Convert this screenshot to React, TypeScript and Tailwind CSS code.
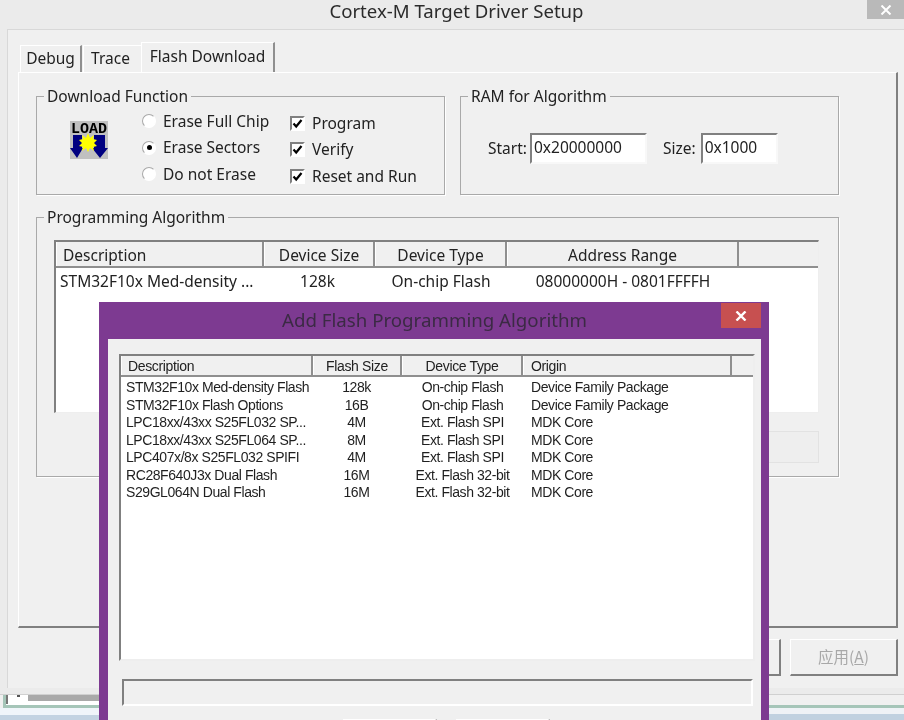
const sans = "font-['Noto_Sans','Liberation_Sans',sans-serif]";

function Group({ title, className, children }: { title: string; className: string; children?: React.ReactNode }) {
  return (
    <div className={`relative border border-[#a9a9a9] shadow-[1px_1px_0_#ffffff] ${className}`}>
      <span className="absolute left-[7px] top-[-11px] bg-[#f0f0f0] px-[3px] text-[15.5px] leading-[20px] text-[#222222] whitespace-nowrap">{title}</span>
      {children}
    </div>
  );
}

function Radio({ label, on }: { label: string; on?: boolean }) {
  return (
    <div className="flex items-center h-[26.5px] gap-[7px]">
      <span className="flex items-center justify-center w-[14px] h-[14px] rounded-full bg-white border border-[#a8a8a8] border-r-white border-b-white">
        {on && <span className="w-[5px] h-[5px] rounded-full bg-black" />}
      </span>
      <span className="text-[15.5px] text-[#222222] whitespace-nowrap">{label}</span>
    </div>
  );
}

function Check({ label }: { label: string }) {
  return (
    <div className="flex items-center h-[26.5px] gap-[7px]">
      <span className="flex items-center justify-center w-[15px] h-[15px] bg-white border-2 border-[#808080] border-r-white border-b-white">
        <svg width="11" height="11" viewBox="0 0 11 11">
          <path d="M1.5 5.5 L4.2 8.5 L9.5 2" fill="none" stroke="#000" strokeWidth="2.2" />
        </svg>
      </span>
      <span className="text-[15.5px] text-[#222222] whitespace-nowrap">{label}</span>
    </div>
  );
}

function LoadIcon() {
  return (
    <svg width="38" height="38" viewBox="0 0 38 38" className="block">
      <rect x="0" y="0" width="38" height="38" fill="#c0c0c0" />
      <text x="1" y="12" fontFamily="'Liberation Mono', monospace" fontWeight="700" fontSize="15" textLength="36" lengthAdjust="spacingAndGlyphs" fill="#000">LOAD</text>
      <path d="M3 14 H12 V27 H13 L7 37 L0 27 H3 Z" fill="#000080" />
      <path d="M24 14 H35 V27 H38 L30 37 L22 27 H24 Z" fill="#000080" />
      <path d="M18 12 L20 17 L24 14 L23 18 L27 19 L24 22 L27 25 L23 26 L24 30 L20 27 L18 31 L16 27 L12 30 L13 26 L9 25 L12 22 L9 19 L13 18 L12 14 L16 17 Z" fill="#ffff00" />
    </svg>
  );
}

function Head({ w, children, left }: { w: string; children?: React.ReactNode; left?: boolean }) {
  return (
    <div className={`${w} flex items-center shrink-0 border-r-2 border-[#8f8f8f] border-l border-l-white ${left ? "pl-[6px]" : "justify-center"}`}>
      {children}
    </div>
  );
}

const rows = [
  ["STM32F10x Med-density Flash", "128k", "On-chip Flash", "Device Family Package"],
  ["STM32F10x Flash Options", "16B", "On-chip Flash", "Device Family Package"],
  ["LPC18xx/43xx S25FL032 SP...", "4M", "Ext. Flash SPI", "MDK Core"],
  ["LPC18xx/43xx S25FL064 SP...", "8M", "Ext. Flash SPI", "MDK Core"],
  ["LPC407x/8x S25FL032 SPIFI", "4M", "Ext. Flash SPI", "MDK Core"],
  ["RC28F640J3x Dual Flash", "16M", "Ext. Flash 32-bit", "MDK Core"],
  ["S29GL064N Dual Flash", "16M", "Ext. Flash 32-bit", "MDK Core"],
];

function AddDialog() {
  return (
    <div className="absolute left-[99px] top-[302px] w-[670px] h-[418px] bg-[#7d3a91] flex flex-col pl-[9px] pr-[8px] font-['Liberation_Sans',sans-serif]">
      <div className="relative h-[37px] shrink-0 flex items-center justify-center">
        <span className="text-[18.7px] text-[#3b2a44] font-['Noto_Sans',sans-serif] mt-[-1px] whitespace-nowrap">Add Flash Programming Algorithm</span>
        <div className="absolute right-0 top-[1px] w-[40px] h-[25px] bg-[#c75050] flex items-center justify-center">
          <svg width="12" height="10" viewBox="0 0 12 10"><path d="M1.5 0.5 L10.5 9.5 M10.5 0.5 L1.5 9.5" stroke="#fff" strokeWidth="2.4" /></svg>
        </div>
      </div>
      <div className="flex-1 bg-[#f0f0f0] flex flex-col pl-[11px] pr-[6px] pt-[15px] min-h-0">
        <div className="h-[307px] shrink-0 w-[636px] bg-white border-2 border-[#808080] border-r-[#eeeeee] border-b-[#eeeeee] flex flex-col">
          <div className="h-[21px] shrink-0 flex bg-[#f0f0f0] border-b-2 border-[#8f8f8f] text-[14px] leading-[18px] text-[#222222] tracking-[-0.35px]">
            <Head w="w-[192px]" left><span className="mt-[1px]">Description</span></Head>
            <Head w="w-[89px]"><span className="mt-[1px]">Flash Size</span></Head>
            <Head w="w-[121px]"><span className="mt-[1px]">Device Type</span></Head>
            <Head w="w-[209px]"><span className="mr-auto pl-[7px] mt-[1px]">Origin</span></Head>
          </div>
          <div className="pt-[2px] text-[14px] leading-[17.5px] text-[#1f1f1f] tracking-[-0.42px]">
            {rows.map((r) => (
              <div key={r[0]} className="flex h-[17.5px] whitespace-nowrap">
                <div className="w-[192px] pl-[5px]">{r[0]}</div>
                <div className="w-[89px] text-center pr-[2px]">{r[1]}</div>
                <div className="w-[121px] text-center">{r[2]}</div>
                <div className="pl-[8px]">{r[3]}</div>
              </div>
            ))}
          </div>
        </div>
        <div className="mt-[18px] ml-[3px] w-[631px] h-[27px] shrink-0 border-2 border-[#808080] border-r-white border-b-white" />
        <div className="mt-[13px] ml-[224px] flex gap-[19px] shrink-0">
          <div className="w-[94px] h-[20px] border-t border-white border-r-2 border-r-[#a9a9a9]" />
          <div className="w-[94px] h-[20px] border-t border-white border-r-2 border-r-[#a9a9a9]" />
        </div>
      </div>
    </div>
  );
}

function BackWindow() {
  return (
    <div className="flex flex-col">
      <div className="h-[7px] bg-[#ebebeb] border-b border-[#d0d0d0]" />
      <div className="flex h-[25px] bg-[#f0f0f0]">
        <div className="w-[99px] shrink-0 flex flex-col">
          <div className="pl-[3px] h-[13px]">
            <div className="h-[13px] border-l-[3px] border-b-[3px] border-[#a5c5b8] bg-white flex">
              <div className="w-[2px] h-[9px] bg-[#777777]" />
              <div className="w-[20px] flex justify-center"><div className="w-[3px] h-[2px] bg-[#555555]" /></div>
              <div className="flex-1 h-[6px] bg-[#a9a9a9]" />
            </div>
          </div>
          <div className="h-[7px] bg-[#f0f5fa]" />
          <div className="h-[5px] bg-[#c3d3e2]" />
        </div>
        <div className="flex-1 flex flex-col">
          <div className="h-[10px]" />
          <div className="h-[3px] bg-[#a5c5b8]" />
          <div className="h-[6px] bg-[#eef2f6]" />
          <div className="h-[6px] bg-[#c0d1e0]" />
        </div>
      </div>
    </div>
  );
}

export default function App() {
  return (
    <div className={`relative w-[904px] h-[720px] overflow-hidden bg-[#ebebeb] ${sans} text-[#222222] blur-[0.35px]`}>
      <div className="relative h-[29px] bg-[#ebebeb] flex items-start justify-center pt-[1px]">
        <span className="text-[18.6px] leading-[20px] text-[#2b2b2b] ml-[9px] whitespace-nowrap">Cortex-M Target Driver Setup</span>
        <div className="absolute right-0 top-0 w-[37px] h-[19px] bg-[#b9b9b9] flex items-center justify-center">
          <svg width="12" height="10" viewBox="0 0 12 10"><path d="M1.5 0.5 L10.5 9.5 M10.5 0.5 L1.5 9.5" stroke="#fff" strokeWidth="2" /></svg>
        </div>
      </div>

      <div className="ml-[7px] h-[659px] border-t border-l border-[#d8d8d8] bg-[#f0f0f0] flex flex-col pl-[10px] pr-[6px]">
        <div className="flex items-end h-[42px] shrink-0 text-[15.5px] pl-[2px]">
          <div className="w-[62px] h-[27px] border-l border-t border-white border-r-2 border-r-[#8f8f8f] flex items-center justify-center pb-[1px]">Debug</div>
          <div className="w-[58px] h-[27px] ml-[1px] border-l border-t border-white flex items-center justify-center pb-[1px] pr-[4px]">Trace</div>
          <div className="w-[134px] h-[30px] border-l border-t border-white border-r-2 border-r-[#8f8f8f] flex items-center justify-center pb-[2px]">Flash Download</div>
        </div>
        <div className="h-[556px] shrink-0 w-[880px] border-l border-t border-white border-r-2 border-b-2 border-r-[#808080] border-b-[#808080] pl-[17px] pt-[23px]">
          <div className="flex gap-[15px]">
            <Group title="Download Function" className="w-[409px] h-[99px] flex items-start pl-[33px] pt-[11px]">
              <div className="pt-[13px] w-[38px] shrink-0"><LoadIcon /></div>
              <div className="ml-[34px] w-[148px] shrink-0"><Radio label="Erase Full Chip" /><Radio on label="Erase Sectors" /><Radio label="Do not Erase" /></div>
              <div className="mt-[2px]"><Check label="Program" /><Check label="Verify" /><Check label="Reset and Run" /></div>
            </Group>
            <Group title="RAM for Algorithm" className="w-[379px] h-[99px] flex items-center text-[15.5px] pl-[27px] pt-[6px]">
              <span>Start:</span>
              <div className="ml-[3px] w-[117px] h-[31px] bg-white border-2 border-[#808080] border-r-[#f8f8f8] border-b-[#f8f8f8] pl-[2px] leading-[24px]">0x20000000</div>
              <span className="ml-[16px]">Size:</span>
              <div className="ml-[5px] w-[77px] h-[31px] bg-white border-2 border-[#808080] border-r-[#f8f8f8] border-b-[#f8f8f8] pl-[2px] leading-[24px]">0x1000</div>
            </Group>
          </div>
          <Group title="Programming Algorithm" className="mt-[22px] w-[803px] h-[260px] pl-[17px] pt-[22px]">
            <div className="w-[765px] h-[173px] bg-white border-t-2 border-l-2 border-[#808080] border-r border-b border-r-[#eeeeee] border-b-[#eeeeee] flex flex-col">
              <div className="h-[26px] shrink-0 flex bg-[#f0f0f0] border-b-2 border-[#8f8f8f] text-[15.5px] leading-[20px]">
                <Head w="w-[208px]" left><span className="mt-[1px]">Description</span></Head>
                <Head w="w-[111px]"><span className="mt-[1px]">Device Size</span></Head>
                <Head w="w-[132px]"><span className="mt-[1px]">Device Type</span></Head>
                <Head w="w-[232px]"><span className="mt-[1px]">Address Range</span></Head>
              </div>
              <div className="flex h-[28px] items-center text-[15.5px] whitespace-nowrap">
                <div className="w-[208px] pl-[4px]">STM32F10x Med-density ...</div>
                <div className="w-[111px] text-center pr-[4px]">128k</div>
                <div className="w-[132px] text-center">On-chip Flash</div>
                <div className="w-[232px] text-center">08000000H - 0801FFFFH</div>
              </div>
            </div>
            <div className="mt-[18px] ml-[400px] w-[365px] h-[32px] bg-[#eeeeee] border border-[#e2e2e2]" />
          </Group>
        </div>
        <div className="flex justify-end gap-[9px] pt-[11px]">
          <div className="w-[108px] h-[37px] border-t border-l border-white border-r-2 border-b-2 border-r-[#808080] border-b-[#808080]" />
          <div className="w-[108px] h-[37px] border-t border-l border-white border-r-2 border-b-2 border-r-[#808080] border-b-[#808080] flex items-center justify-center text-[15.5px] text-[#a8a8a8] font-['Noto_Sans_CJK_SC','Noto_Sans',sans-serif]">应用(<span className="underline">A</span>)</div>
        </div>
      </div>

      <BackWindow />
      <AddDialog />
    </div>
  );
}
